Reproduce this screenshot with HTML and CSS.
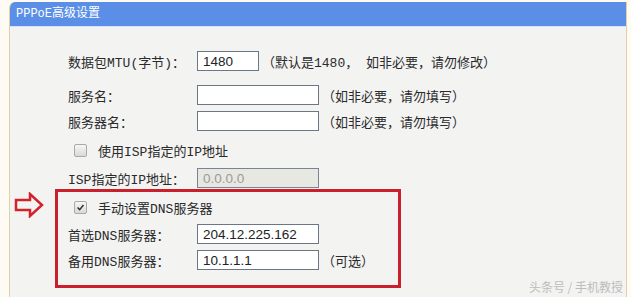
FILE: index.html
```html
<!DOCTYPE html>
<html lang="zh-CN">
  <head>
    <meta charset="UTF-8" />
    <title>PPPoE高级设置</title>
    <link rel="stylesheet" href="styles.css">
  </head>
  <body>
    <div class="panel">
      <div class="panel-title">PPPoE高级设置</div>

      <div class="form">
        <div class="row row-mtu">
          <label class="label" for="mtu">数据包MTU(字节)：</label>
          <input class="field field-short" id="mtu" type="text" value="1480" />
          <span class="hint">（默认是1480， 如非必要，请勿修改）</span>
        </div>

        <div class="row">
          <label class="label" for="service">服务名：</label>
          <input class="field" id="service" type="text" />
          <span class="hint">（如非必要，请勿填写）</span>
        </div>

        <div class="row">
          <label class="label" for="server">服务器名：</label>
          <input class="field" id="server" type="text" />
          <span class="hint">（如非必要，请勿填写）</span>
        </div>

        <div class="check-row check-isp">
          <span class="cb"></span>
          <span>使用ISP指定的IP地址</span>
        </div>

        <div class="row">
          <label class="label" for="ispip">ISP指定的IP地址：</label>
          <input class="field" id="ispip" type="text" value="0.0.0.0" disabled />
        </div>

        <div class="dns">
          <div class="arrow-col">
            <svg class="arrow" width="30" height="26" viewBox="0 0 30 26">
              <polygon points="2,8 16,8 16,2 28,13 16,24 16,18 2,18"
                fill="none" stroke="#d2232a" stroke-width="2.5" stroke-linejoin="miter" />
            </svg>
          </div>
          <div class="dns-box">
            <div class="check-row">
              <span class="cb">
                <svg width="13" height="13" viewBox="0 0 13 13">
                  <path d="M3 6.5 L5.5 9 L10 3.5" fill="none" stroke="#333" stroke-width="1.8" />
                </svg>
              </span>
              <span>手动设置DNS服务器</span>
            </div>
            <div class="row">
              <label class="label" for="dns1">首选DNS服务器：</label>
              <input class="field" id="dns1" type="text" value="204.12.225.162" />
            </div>
            <div class="row">
              <label class="label" for="dns2">备用DNS服务器：</label>
              <input class="field" id="dns2" type="text" value="10.1.1.1" />
              <span class="hint">（可选）</span>
            </div>
          </div>
        </div>
      </div>

      <div class="watermark">头条号 / 手机教授</div>
    </div>
  </body>
</html>
```

FILE: styles.css
```css
body {
  margin: 0;
  background-color: #fdfbf3;
  font-family: "Liberation Mono", "Noto Sans CJK SC", sans-serif;
  font-size: 13px;
  color: #2a2a2a;
  overflow: hidden;
}
.panel {
  position: relative;
  margin: 2px 4px 0 9px;
  height: 295px;
  background-color: #f3f3f2;
  border-left: 1px solid #e2cfa6;
  border-right: 1px solid #e2cfa6;
  border-top-left-radius: 6px;
  overflow: hidden;
}
.panel-title {
  height: 25px;
  line-height: 25px;
  padding-left: 6px;
  background-color: #5b8fe7;
  color: white;
  font-size: 12px;
  border-bottom: 1px solid #d6e2f5;
  box-sizing: border-box;
}
.form {
  display: flex;
  flex-direction: column;
  padding: 23px 0 0 45px;
}
.row {
  display: flex;
  align-items: center;
  height: 22px;
  padding-left: 13px;
}
.row + .row {
  margin-top: 4px;
}
.row-mtu {
  margin-bottom: 8px;
}
.label {
  width: 129px;
  flex-shrink: 0;
}
.field {
  width: 122px;
  height: 20px;
  box-sizing: border-box;
  margin: 0;
  padding: 0 5px;
  border: 1px solid #6b7786;
  background: white;
  font-family: "Liberation Sans", Arial, sans-serif;
  font-size: 13.5px;
  color: #222;
}
.field-short {
  width: 62px;
}
.field:disabled {
  background-color: #e8e8e3;
  color: #9a9a9a;
  border-color: #7a8490;
}
.hint {
  margin-left: 3px;
  white-space: nowrap;
}
.check-row {
  display: flex;
  align-items: center;
  height: 22px;
  padding-left: 13px;
}
.check-isp {
  margin: 7px 0 6px;
}
.cb {
  width: 11px;
  height: 11px;
  margin: 0 11px 0 6px;
  border: 1px solid #a9a9a9;
  border-radius: 2px;
  background: linear-gradient(#f6f6f6, #d9d9d9);
  display: flex;
  align-items: center;
  justify-content: center;
}
.cb svg {
  display: block;
}
.dns {
  display: flex;
  align-items: flex-start;
  margin-left: -45px;
}
.arrow-col {
  width: 45px;
  flex-shrink: 0;
  padding: 3px 0 0 4px;
  box-sizing: border-box;
}
.arrow {
  display: block;
}
.dns-box {
  width: 346px;
  box-sizing: border-box;
  border: 3px solid #c9202c;
  padding: 4px 0 14px 10px;
}
.dns-box .check-row {
  padding-left: 0;
}
.dns-box .row {
  padding-left: 0;
}
.dns-box .check-row + .row {
  margin-top: 5px;
}
.watermark {
  position: absolute;
  right: 3px;
  bottom: 2px;
  font-family: "Noto Sans CJK SC", sans-serif;
  font-size: 12px;
  color: #bdbdbd;
}
```
